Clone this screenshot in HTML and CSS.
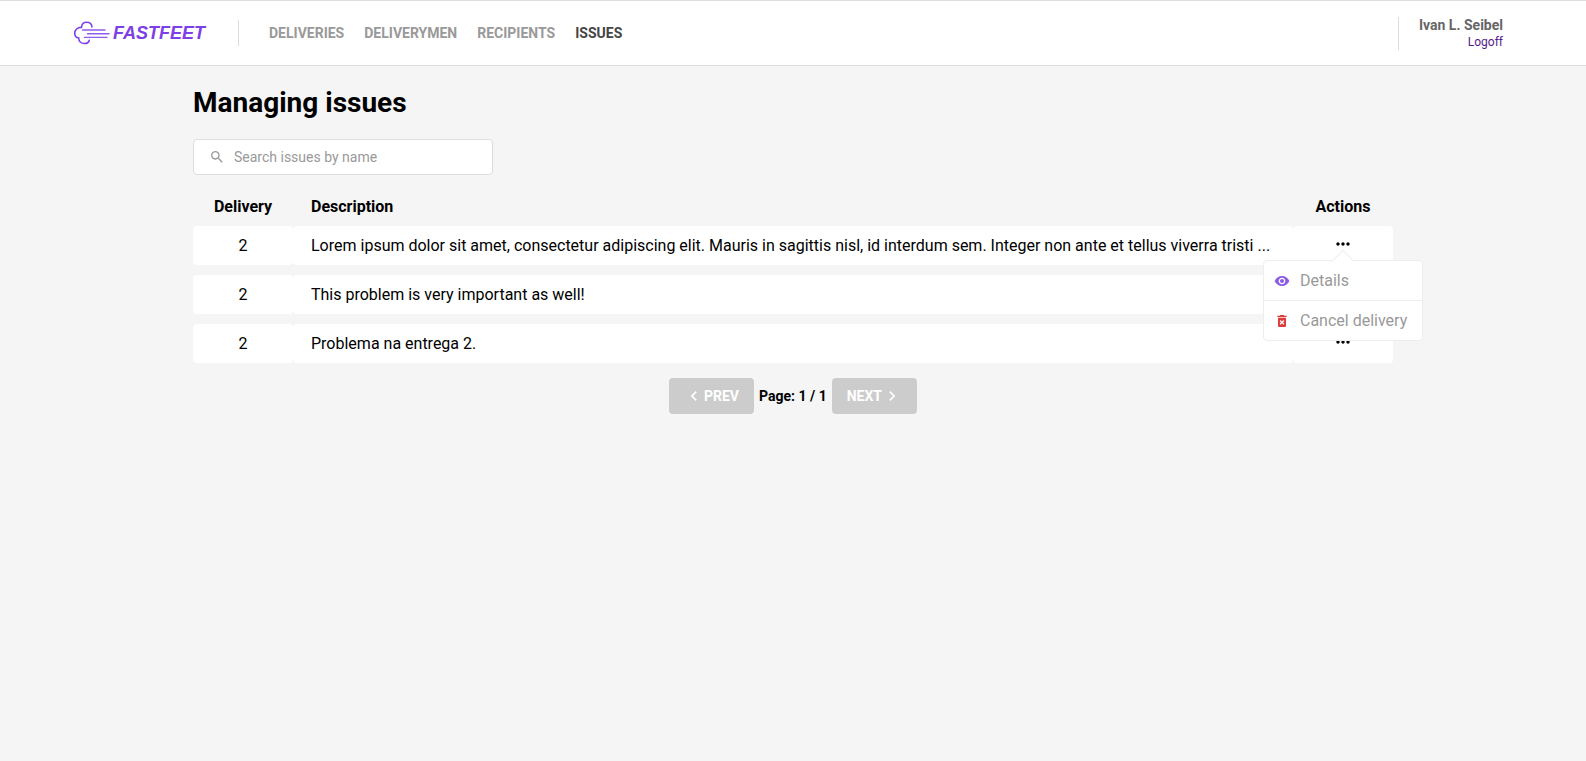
FILE: index.html
```
<!DOCTYPE html>
<html lang="en">
<head>
<meta charset="utf-8">
<meta name="viewport" content="width=device-width, initial-scale=1">
<title>FastFeet | Issues</title>
<link rel="stylesheet" href="styles.css">
</head>
<body>
<svg class="sprite" aria-hidden="true">
  <symbol id="more" viewBox="0 0 24 24"><path d="M6 10c-1.100 0-2 .9-2 2s.9 2 2 2 2-.9 2-2-.9-2-2-2zm12 0c-1.100 0-2 .9-2 2s.9 2 2 2 2-.9 2-2-.9-2-2-2zm-6 0c-1.100 0-2 .9-2 2s.9 2 2 2 2-.9 2-2-.9-2-2-2z"/></symbol>
</svg>
<header class="header">
  <div class="header-content">
    <a class="logo" href="#" aria-label="FastFeet">
      <svg class="logo-mark" viewBox="-0.5 0 37 24" aria-hidden="true">
        <path d="M18.400 6C18.400 3 16 1.200 13.100 1.200C10.200 1.200 8.200 3.200 8 6.400C4 6.200 1.200 9 1.200 12.200C1.200 14.800 3 16.700 5.200 17C5.200 20.400 7.600 22.500 10.700 22.500C13.300 22.500 15.300 21.200 15.800 19.200"/>
        <path class="logo-lines" d="M9 9h22.500M14 12.700h21.500M11 16.400h22.500"/>
      </svg>
      <span class="logo-text">FASTFEET</span>
    </a>
    <nav class="nav">
      <a href="#">DELIVERIES</a>
      <a href="#">DELIVERYMEN</a>
      <a href="#">RECIPIENTS</a>
      <a class="active" href="#">ISSUES</a>
    </nav>
    <div class="profile">
      <strong>Ivan L. Seibel</strong>
      <a href="#">Logoff</a>
    </div>
  </div>
</header>
<main class="container">
  <h1>Managing issues</h1>
  <label class="search">
    <svg class="icon" viewBox="0 0 24 24" aria-hidden="true"><path d="M15.500 14h-.79l-.28-.27A6.471 6.471 0 0 0 16 9.500 6.500 6.500 0 1 0 9.500 16c1.610 0 3.090-.59 4.230-1.570l.27.28v.79l5 4.990L20.490 19l-4.990-5zm-6 0C7.010 14 5 11.990 5 9.500S7.010 5 9.500 5 14 7.010 14 9.500 11.990 14 9.500 14z"/></svg>
    <input type="text" placeholder="Search issues by name" aria-label="Search issues by name">
  </label>
  <table class="issues">
    <thead>
      <tr><th class="side">Delivery</th><th class="description">Description</th><th class="side">Actions</th></tr>
    </thead>
    <tbody>
      <tr>
        <td class="side">2</td>
        <td class="description">Lorem ipsum dolor sit amet, consectetur adipiscing elit. Mauris in sagittis nisl, id interdum sem. Integer non ante et tellus viverra tristi ...</td>
        <td class="side actions">
          <button class="more" type="button" aria-label="Actions" aria-expanded="true"><svg viewBox="0 0 24 24"><use href="#more"/></svg></button>
          <div class="menu">
            <button type="button"><svg class="icon eye" viewBox="0 0 24 24" aria-hidden="true"><path d="M12 4.500C7 4.500 2.730 7.610 1 12c1.730 4.390 6 7.500 11 7.500s9.270-3.110 11-7.500c-1.730-4.390-6-7.500-11-7.500zM12 17c-2.760 0-5-2.240-5-5s2.240-5 5-5 5 2.240 5 5-2.240 5-5 5zm0-8c-1.660 0-3 1.340-3 3s1.340 3 3 3 3-1.340 3-3-1.340-3-3-3z"/></svg>Details</button>
            <button type="button"><svg class="icon trash" viewBox="0 0 24 24" aria-hidden="true"><path d="M6 19c0 1.100.9 2 2 2h8c1.100 0 2-.9 2-2V7H6v12zm2.460-7.120l1.410-1.410L12 12.590l2.120-2.120 1.410 1.410L13.410 14l2.120 2.120-1.410 1.410L12 15.410l-2.120 2.120-1.410-1.410L10.590 14l-2.130-2.120zM15.500 4l-1-1h-5l-1 1H5v2h14V4z"/></svg>Cancel delivery</button>
          </div>
        </td>
      </tr>
      <tr>
        <td class="side">2</td>
        <td class="description">This problem is very important as well!</td>
        <td class="side actions"><button class="more" type="button" aria-label="Actions"><svg viewBox="0 0 24 24"><use href="#more"/></svg></button></td>
      </tr>
      <tr>
        <td class="side">2</td>
        <td class="description">Problema na entrega 2.</td>
        <td class="side actions"><button class="more" type="button" aria-label="Actions"><svg viewBox="0 0 24 24"><use href="#more"/></svg></button></td>
      </tr>
    </tbody>
  </table>
  <div class="pagination">
    <button type="button" disabled><svg viewBox="0 0 24 24" aria-hidden="true"><path d="M15.410 7.410L14 6l-6 6 6 6 1.410-1.410L10.830 12z"/></svg>PREV</button>
    <span>Page: 1 / 1</span>
    <button type="button" disabled>NEXT<svg viewBox="0 0 24 24" aria-hidden="true"><path d="M10 6L8.590 7.410 13.170 12l-4.580 4.590L10 18l6-6z"/></svg></button>
  </div>
</main>
</body>
</html>
```
FILE: styles.css
```
* {
  box-sizing: border-box;
  margin: 0;
  padding: 0;
}

body {
  background: #f5f5f5;
  color: #000;
  font: 14px/16px Roboto, sans-serif;
}

button,
input {
  font: inherit;
}

button {
  border: 0;
  cursor: pointer;
}

a {
  text-decoration: none;
}

svg {
  display: block;
  fill: currentColor;
}

.sprite {
  position: absolute;
  width: 0;
  height: 0;
}

.icon {
  width: 16px;
  height: 16px;
  flex: none;
}

.header {
  background: #fff;
  border: 1px solid #ddd;
  border-width: 1px 0;
}

.header-content {
  max-width: 1440px;
  height: 64px;
  margin: 0 auto;
  padding-right: 10px;
  display: flex;
  align-items: center;
}

.logo {
  display: flex;
  align-items: center;
  gap: 3px;
  height: 26px;
  padding-right: 33px;
  border-right: 1px solid #ddd;
  color: #7d40e7;
}

.logo-mark {
  width: 37px;
  height: 24px;
  fill: none;
  stroke: currentColor;
  stroke-width: 1.6;
  stroke-linecap: round;
}

.logo-lines {
  stroke-width: 1.4;
  opacity: 0.85;
}

.logo-text {
  font: italic bold 18px/20px "Liberation Sans", Arial, sans-serif;
}

.nav {
  display: flex;
  gap: 20px;
  margin-left: 30px;
  font-weight: bold;
}

.nav a {
  color: #999;
}

.nav .active {
  color: #444;
}

.profile {
  margin-left: auto;
  padding-left: 20px;
  border-left: 1px solid #ddd;
  text-align: right;
}

.profile strong {
  display: block;
  color: #666;
}

.profile a {
  color: #551a8b;
  font-size: 12px;
}

.container {
  max-width: 1200px;
  margin: 0 auto;
  padding-top: 20px;
}

h1 {
  font-size: 28px;
  line-height: 33px;
}

.search {
  display: flex;
  align-items: center;
  gap: 9px;
  width: 300px;
  height: 36px;
  margin: 20px 0 12px;
  padding: 0 15px;
  background: #fff;
  border: 1px solid #ddd;
  border-radius: 4px;
  color: #999;
}

.search input {
  flex: 1;
  min-width: 0;
  border: 0;
  outline: 0;
  background: none;
}

.search input::placeholder {
  color: #999;
}

.issues {
  width: 100%;
  table-layout: fixed;
  border-spacing: 0 10px;
  font-size: 16px;
  line-height: 19px;
}

.issues td {
  background: #fff;
  border-radius: 4px;
  padding: 10px 0;
}

.issues .side {
  width: 100px;
  text-align: center;
}

.issues .description {
  padding-left: 18px;
  text-align: left;
}

.issues .actions {
  position: relative;
  padding: 0;
}

.more {
  display: block;
  margin: 0 auto;
  padding: 0 0 3px;
  background: none;
}

.more svg {
  width: 20px;
  height: 20px;
}

.menu {
  position: absolute;
  z-index: 1;
  top: 34px;
  left: 50%;
  width: 160px;
  margin-left: -80px;
  background: #fff;
  border: 1px solid #eee;
  border-radius: 4px;
}

.menu::before {
  content: "";
  position: absolute;
  top: -8px;
  left: 50%;
  width: 15px;
  height: 15px;
  margin-left: -8px;
  background: #fff;
  border: 1px solid #eee;
  border-width: 1px 0 0 1px;
  transform: rotate(45deg);
}

.menu button {
  position: relative;
  display: flex;
  align-items: center;
  gap: 10px;
  width: 100%;
  height: 39px;
  padding: 0 10px;
  background: none;
  color: #999;
  font-size: 16px;
  white-space: nowrap;
}

.menu button + button {
  height: 40px;
  border-top: 1px solid #eee;
}

.eye {
  color: #8e5be8;
}

.trash {
  color: #de3b3b;
}

.pagination {
  display: flex;
  justify-content: center;
  align-items: center;
  gap: 5px;
  margin-top: 5px;
  font-weight: bold;
}

.pagination button {
  display: flex;
  align-items: center;
  height: 36px;
  padding: 0 15px;
  background: #ccc;
  color: #fff;
  border-radius: 4px;
}

.pagination svg {
  width: 20px;
  height: 20px;
}
```
